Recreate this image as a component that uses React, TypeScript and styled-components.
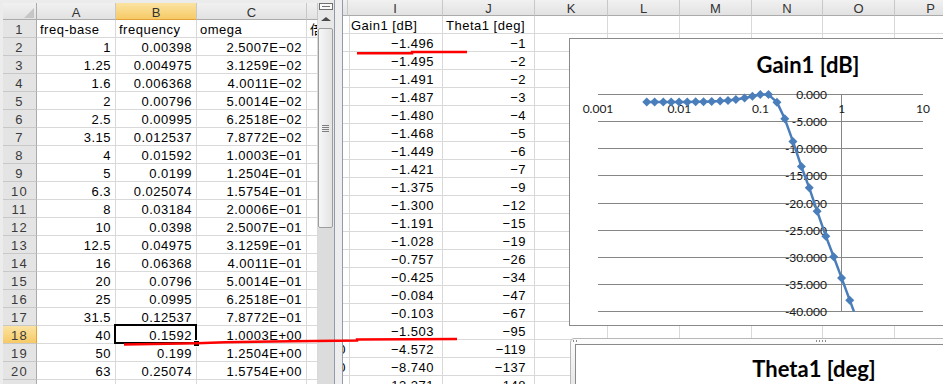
import React from 'react';
import styled, { createGlobalStyle, css } from 'styled-components';

const GlobalStyle = createGlobalStyle`
  html, body {
    margin: 0;
    padding: 0;
    background: #ffffff;
  }
  body {
    font-family: "Liberation Sans", "Noto Sans CJK JP", sans-serif;
  }
`;

const Screen = styled.div`
  position: relative;
  display: flex;
  width: 943px;
  height: 384px;
  overflow: hidden;
  background: #ffffff;
`;

const LeftWindow = styled.div`
  display: flex;
  flex: none;
  width: 334px;
  height: 100%;
  box-sizing: border-box;
  padding: 3px 0 0 3px;
  background: #ececec;
`;

const RightWindow = styled.div`
  position: relative;
  display: flex;
  flex: 1;
  min-width: 0;
  overflow: hidden;
`;

const Splitter = styled.div`
  flex: none;
  width: 9px;
  box-sizing: border-box;
  border-left: 1px solid #8f9ba8;
  border-right: 1px solid #8f9ba8;
  background: #eeeeee;
`;

const Sheet = styled.div<{ $cols: string; $head: number }>`
  display: grid;
  grid-template-columns: ${(p) => p.$cols};
  grid-template-rows: ${(p) => p.$head}px;
  grid-auto-rows: 18px;
  align-content: start;
  justify-content: start;
  flex: 1;
  min-width: 0;
  overflow: hidden;
  background: #ffffff;
  font-size: 13px;
  color: #000000;
`;

const ColHead = styled.div<{ $active?: boolean; $line: number }>`
  box-sizing: border-box;
  border-right: 1px solid #c8c8c8;
  border-bottom: 1px solid ${(p) => (p.$active ? '#e3a13a' : '#ababab')};
  background: ${(p) =>
    p.$active ? 'linear-gradient(#fbe3a2, #f6ca66)' : 'linear-gradient(#f1f1f1, #e2e2e2)'};
  color: #333333;
  text-align: center;
  line-height: ${(p) => p.$line}px;
  overflow: hidden;
  white-space: nowrap;
`;

const Corner = styled(ColHead)`
  position: relative;
  border-right-color: #ababab;

  &::after {
    content: '';
    position: absolute;
    right: 2px;
    bottom: 1px;
    border-style: solid;
    border-width: 0 0 10px 10px;
    border-color: transparent transparent #c6c6c6 transparent;
  }
`;

const RowHead = styled.div<{ $active?: boolean }>`
  box-sizing: border-box;
  border-right: 1px solid ${(p) => (p.$active ? '#e3a13a' : '#ababab')};
  border-bottom: 1px solid #c8c8c8;
  background: ${(p) =>
    p.$active ? 'linear-gradient(#fbe3a2, #f6ca66)' : '#e4e4e4'};
  color: #3a3a3a;
  text-align: center;
  line-height: 20px;
  letter-spacing: 1.2px;
  overflow: hidden;
`;

const Cell = styled.div<{ $right?: boolean; $pad?: number; $selected?: boolean; $rtl?: boolean }>`
  position: relative;
  box-sizing: border-box;
  min-width: 0;
  padding: 0 ${(p) => p.$pad ?? 4}px 0 3px;
  border-right: 1px solid #d9d9d9;
  border-bottom: 1px solid #d9d9d9;
  line-height: 20px;
  letter-spacing: 0.5px;
  text-align: ${(p) => (p.$right ? 'right' : 'left')};
  direction: ${(p) => (p.$rtl ? 'rtl' : 'ltr')};
  white-space: nowrap;
  overflow: ${(p) => (p.$selected ? 'visible' : 'hidden')};

  ${(p) =>
    p.$selected &&
    css`
      z-index: 2;
      &::after {
        content: '';
        position: absolute;
        left: -2px;
        top: -2px;
        right: -1px;
        bottom: -1px;
        border: 2px solid #000000;
      }
      &::before {
        content: '';
        position: absolute;
        right: -4px;
        bottom: -4px;
        width: 5px;
        height: 5px;
        background: #000000;
        border: 1px solid #ffffff;
        z-index: 3;
      }
    `}
`;

const VScroll = styled.div`
  flex: none;
  width: 16px;
  display: flex;
  flex-direction: column;
  align-items: flex-start;
  background: #e8e8e8;
`;

const SplitBox = styled.div`
  width: 14px;
  height: 7px;
  margin-left: 1px;
  box-sizing: border-box;
  border: 1px solid #707070;
  background: #fafafa;
  display: flex;
  align-items: center;
  justify-content: center;

  &::after {
    content: '';
    width: 8px;
    height: 1px;
    background: #707070;
  }
`;

const ArrowButton = styled.div`
  width: 15px;
  height: 18px;
  display: flex;
  align-items: center;
  justify-content: center;

  &::after {
    content: '';
    border-style: solid;
    border-width: 0 5px 4px 5px;
    border-color: transparent transparent #4a4a4a transparent;
  }
`;

const Thumb = styled.div`
  width: 15px;
  height: 200px;
  box-sizing: border-box;
  border: 1px solid #9d9d9d;
  border-radius: 2px;
  background: linear-gradient(90deg, #f6f6f6, #e4e4e4);
  display: flex;
  align-items: center;
  justify-content: center;
`;

const Grip = styled.div`
  width: 7px;
  height: 7px;
  background: repeating-linear-gradient(#7f7f7f 0 1px, transparent 1px 2px);
`;

const Track = styled.div`
  flex: 1;
  width: 16px;
  background: #dcdcdc;
`;

const Floating = styled.div<{ $left: number; $top: number }>`
  position: absolute;
  left: ${(p) => p.$left}px;
  top: ${(p) => p.$top}px;
  z-index: 3;
`;

const ChartBox = styled.div<{ $width: number; $height: number }>`
  width: ${(p) => p.$width}px;
  height: ${(p) => p.$height}px;
  box-sizing: border-box;
  border: 1px solid #8a8a8a;
  background: #ffffff;
  display: flex;
  flex-direction: column;
  overflow: hidden;
`;

const ChartTitle = styled.div<{ $padTop: number }>`
  flex: none;
  height: 50px;
  box-sizing: border-box;
  padding-top: ${(p) => p.$padTop}px;
  font-family: Lato, "Open Sans", sans-serif;
  font-weight: 700;
  font-size: 22px;
  line-height: 24px;
  text-align: center;
  color: #000000;
`;

const SelectFrame = styled.div`
  position: relative;
  box-sizing: border-box;
  padding: 5px 4px 0 4px;
  border: 1px solid #b7b7b7;
  border-radius: 4px;
  background: linear-gradient(#fdfdfd, #e9e9e9 40px);
`;

const FrameGrip = styled.div<{ $center?: boolean }>`
  position: absolute;
  top: 1px;
  left: ${(p) => (p.$center ? '245px' : '2px')};
  width: ${(p) => (p.$center ? '12px' : '4px')};
  height: 2px;
  background: repeating-linear-gradient(90deg, #8c8c8c 0 1px, transparent 1px 3px);
`;

const Annotations = styled.svg`
  position: absolute;
  left: 0;
  top: 0;
  pointer-events: none;
  z-index: 10;
`;

const leftRows: string[][] = [
  ['freq-base', 'frequency', 'omega', '倍率'],
  ['1', '0.00398', '2.5007E−02'],
  ['1.25', '0.004975', '3.1259E−02'],
  ['1.6', '0.006368', '4.0011E−02'],
  ['2', '0.00796', '5.0014E−02'],
  ['2.5', '0.00995', '6.2518E−02'],
  ['3.15', '0.012537', '7.8772E−02'],
  ['4', '0.01592', '1.0003E−01'],
  ['5', '0.0199', '1.2504E−01'],
  ['6.3', '0.025074', '1.5754E−01'],
  ['8', '0.03184', '2.0006E−01'],
  ['10', '0.0398', '2.5007E−01'],
  ['12.5', '0.04975', '3.1259E−01'],
  ['16', '0.06368', '4.0011E−01'],
  ['20', '0.0796', '5.0014E−01'],
  ['25', '0.0995', '6.2518E−01'],
  ['31.5', '0.12537', '7.8772E−01'],
  ['40', '0.1592', '1.0003E+00'],
  ['50', '0.199', '1.2504E+00'],
  ['63', '0.25074', '1.5754E+00'],
  ['80', '0.3184', '2.0006E+00'],
];

const rightRows: string[][] = [
  ['Gain1 [dB]', 'Theta1 [deg]'],
  ['−1.496', '−1'],
  ['−1.495', '−2'],
  ['−1.491', '−2'],
  ['−1.487', '−3'],
  ['−1.480', '−4'],
  ['−1.468', '−5'],
  ['−1.449', '−6'],
  ['−1.421', '−7'],
  ['−1.375', '−9'],
  ['−1.300', '−12'],
  ['−1.191', '−15'],
  ['−1.028', '−19'],
  ['−0.757', '−26'],
  ['−0.425', '−34'],
  ['−0.084', '−47'],
  ['−0.103', '−67'],
  ['−1.503', '−95'],
  ['−4.572', '−119'],
  ['−8.740', '−137'],
  ['−13.371', '−148'],
];

const rightCols = ['', 'I', 'J', 'K', 'L', 'M', 'N', 'O', 'P'];

const freqBase = [1, 1.25, 1.6, 2, 2.5, 3.15, 4, 5, 6.3, 8, 10, 12.5, 16, 20, 25, 31.5, 40, 50, 63, 80, 100, 125, 160, 200, 250, 315, 400];
const gains = [
  -1.496, -1.495, -1.491, -1.487, -1.48, -1.468, -1.449, -1.421, -1.375, -1.3, -1.191, -1.028, -0.757,
  -0.425, -0.084, -0.103, -1.503, -4.572, -8.74, -13.371, -17.3, -21.6, -26.2, -30.0, -33.9, -38.0, -42.2,
];

// plot lives in page coordinates through the viewBox
const X0 = 598;
const DECADE = 81.25;
const Y0 = 94;
const PER_DB = 217 / 40;
const px = (f: number) => X0 + (Math.log10(f) + 3) * DECADE;
const py = (g: number) => Y0 - g * PER_DB;

const GainPlot: React.FC = () => {
  const pts = freqBase.map((b, i) => [px(b * 0.00398), py(gains[i])]);
  const labelFont = { fontFamily: 'Lato, "Open Sans", sans-serif', fontSize: 12 };

  return (
    <svg width={476} height={236} viewBox="570 89 476 236">
      <defs>
        <clipPath id="plotClip">
          <rect x={585} y={80} width={350} height={231.5} />
        </clipPath>
      </defs>
      {Array.from({ length: 9 }, (_, k) => {
        const y = Math.round(Y0 + k * 5 * PER_DB) + 0.5;
        return (
          <g key={k}>
            <line x1={598} x2={923} y1={y} y2={y} stroke="#868686" strokeWidth={1} />
          </g>
        );
      })}
      <line x1={841.5} x2={841.5} y1={94} y2={311.5} stroke="#868686" strokeWidth={1} />
      {['0.001', '0.01', '0.1', '1', '10'].map((t, i) => (
        <text key={t} x={X0 + i * DECADE} y={113} textAnchor="middle" fill="#1a1a1a" style={labelFont}>
          {t}
        </text>
      ))}
      {Array.from({ length: 9 }, (_, k) => (
        <text
          key={k}
          x={827}
          y={Math.round(Y0 + k * 5 * PER_DB) + 4.5}
          textAnchor="end"
          fill="#1a1a1a"
          style={labelFont}
        >
          {k === 0 ? '0.000' : `-${k * 5}.000`}
        </text>
      ))}
      <g clipPath="url(#plotClip)">
        <polyline
          points={pts.map((p) => p.join(',')).join(' ')}
          fill="none"
          stroke="#4a7ebb"
          strokeWidth={2.5}
          strokeLinejoin="round"
        />
        {pts.map(([x, y], i) => (
          <path
            key={i}
            d={`M${x} ${y - 4.5} L${x + 4.5} ${y} L${x} ${y + 4.5} L${x - 4.5} ${y} Z`}
            fill="#4a7ebb"
          />
        ))}
      </g>
    </svg>
  );
};

const App: React.FC = () => {
  return (
    <Screen>
      <GlobalStyle />
      <LeftWindow>
        <Sheet $cols="34px 79px 81px 110px 11px" $head={17}>
          <Corner $line={20} />
          <ColHead $line={20}>A</ColHead>
          <ColHead $line={20} $active>B</ColHead>
          <ColHead $line={20}>C</ColHead>
          <ColHead $line={20} />
          {leftRows.map((row, r) => {
            const head = r === 0;
            const active = r === 17;
            return (
              <React.Fragment key={r}>
                <RowHead $active={active}>{r + 1}</RowHead>
                <Cell $right={!head}>{row[0]}</Cell>
                <Cell $right={!head} $selected={active}>{row[1]}</Cell>
                <Cell $right={!head}>{row[2]}</Cell>
                <Cell>{row[3] ?? ''}</Cell>
              </React.Fragment>
            );
          })}
        </Sheet>
        <VScroll>
          <SplitBox />
          <ArrowButton />
          <Thumb>
            <Grip />
          </Thumb>
          <Track />
        </VScroll>
      </LeftWindow>
      <Splitter />
      <RightWindow>
        <Sheet $cols="5px 95px 92px 73px 72px 72px 71px 72px 72px" $head={16}>
          {rightCols.map((c, i) => (
            <ColHead key={i} $line={18}>{c}</ColHead>
          ))}
          {rightRows.map((row, r) => {
            const head = r === 0;
            return (
              <React.Fragment key={r}>
                <Cell $rtl $pad={3}>{r === 18 || r === 19 ? '0' : ''}</Cell>
                <Cell $right={!head} $pad={8}>{row[0]}</Cell>
                <Cell $right={!head} $pad={8}>{row[1]}</Cell>
                {rightCols.slice(3).map((c) => (
                  <Cell key={c} />
                ))}
              </React.Fragment>
            );
          })}
        </Sheet>
        <Floating $left={226} $top={38}>
          <ChartBox $width={478} $height={288}>
            <ChartTitle $padTop={14}>Gain1 [dB]</ChartTitle>
            <GainPlot />
          </ChartBox>
        </Floating>
        <Floating $left={227} $top={338}>
          <SelectFrame>
            <FrameGrip />
            <FrameGrip $center />
            <ChartBox $width={478} $height={120}>
              <ChartTitle $padTop={12}>Theta1 [deg]</ChartTitle>
            </ChartBox>
          </SelectFrame>
        </Floating>
      </RightWindow>
      <Annotations width={943} height={384}>
        <polyline
          points="357,53.3 412,53.3 412,52 467,52"
          fill="none"
          stroke="#ff0000"
          strokeWidth={2.5}
        />
        <polyline
          points="124,344.5 197,343.2 225,342.2 292,341.2 357,340.6 357,339.4 457,339"
          fill="none"
          stroke="#ff0000"
          strokeWidth={2.5}
        />
      </Annotations>
    </Screen>
  );
};

export default App;
